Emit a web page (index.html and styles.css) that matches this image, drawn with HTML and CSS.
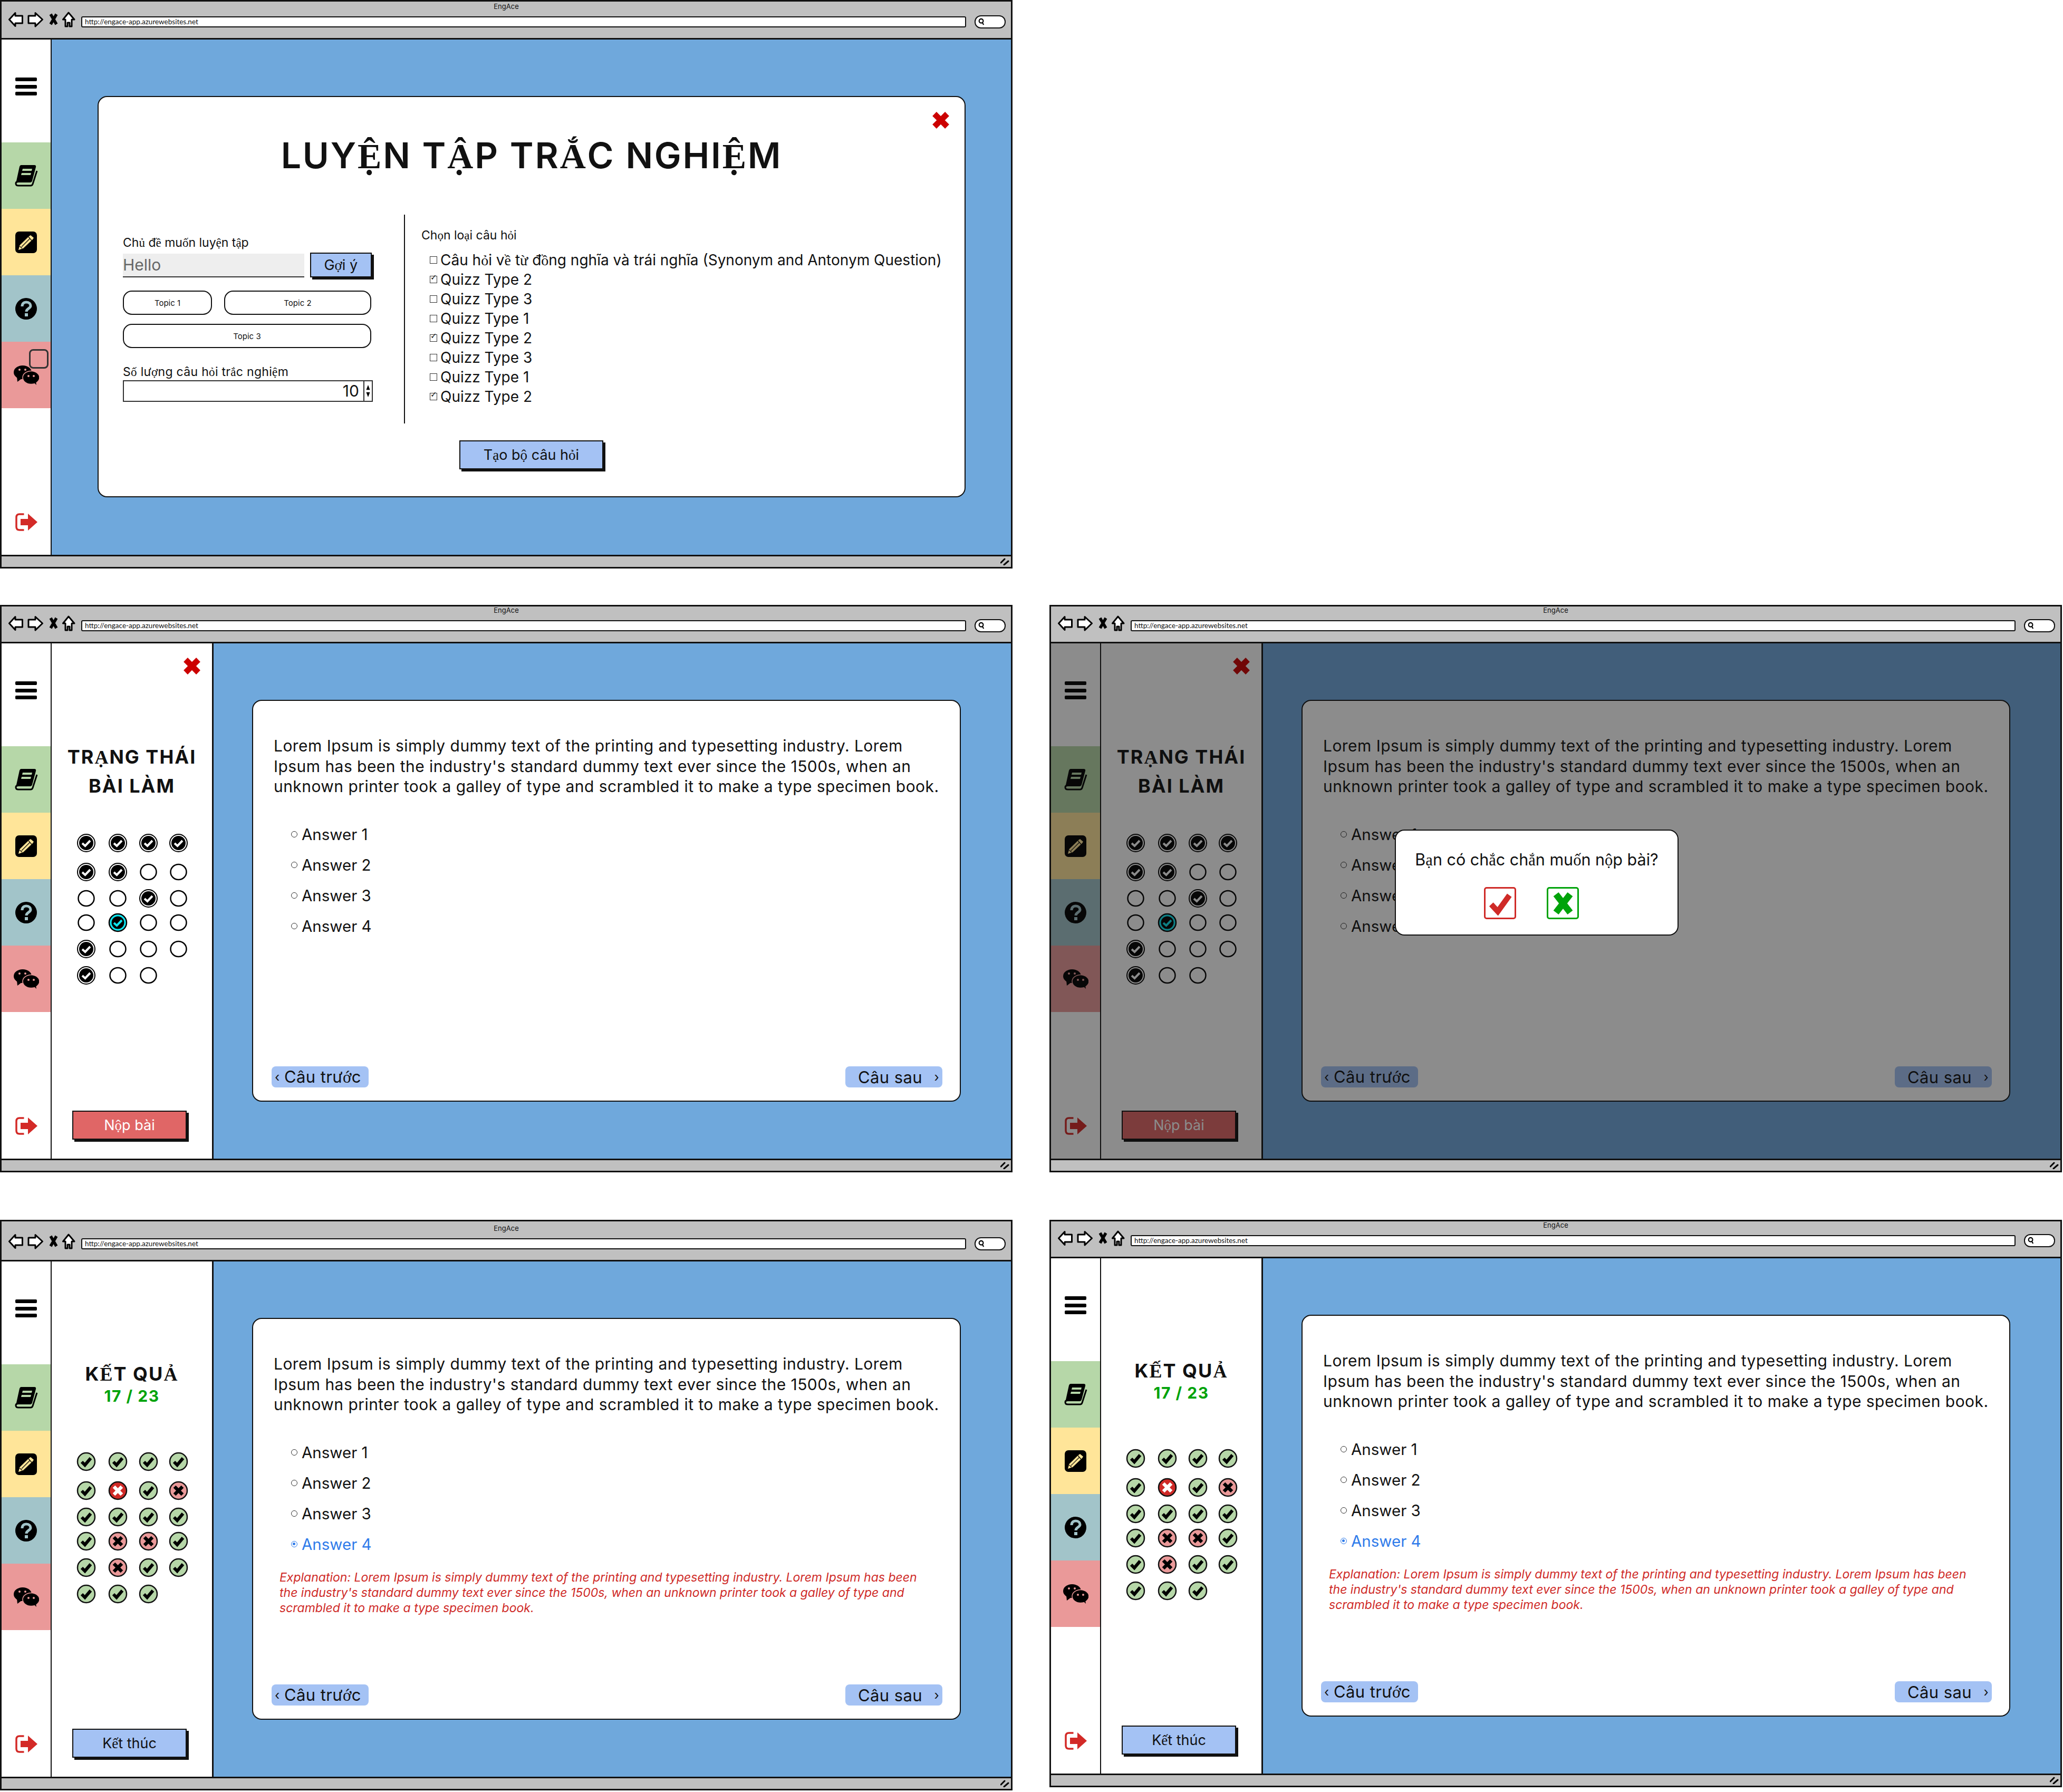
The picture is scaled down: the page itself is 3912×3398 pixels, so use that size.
FILE: index.html
```html
<!DOCTYPE html>
<html lang="vi">

<head>
    <meta charset="UTF-8">
    <title>EngAce wireframes</title>
    <link rel="stylesheet" href="styles.css">
</head>

<body>

    <!-- shared icons -->
    <svg class="sprites" xmlns="http://www.w3.org/2000/svg">
        <symbol id="i-nav" viewBox="0 0 127 30">
            <path d="M1.5 15 13 2.5V8H26.5V22H13V27.5Z" fill="#fff" stroke="#000" stroke-width="3" stroke-linejoin="round"/>
            <path d="M38 8H51V2.5L64.5 15 51 28V22H38Z" fill="#fff" stroke="#000" stroke-width="3" stroke-linejoin="round"/>
            <path d="M80 5 91 24M91 5 80 24" stroke="#000" stroke-width="5.5" fill="none"/>
            <path d="M114 2 103.500 15H108V28H112V21H116V28H120V15H125Z" fill="#fff" stroke="#000" stroke-width="3" stroke-linejoin="round"/>
        </symbol>
        <symbol id="i-lens" viewBox="0 0 14 16">
            <circle cx="6.500" cy="6.500" r="4.500" fill="none" stroke="#000" stroke-width="2.500"/>
            <path d="M9 10 12 15" stroke="#000" stroke-width="2.500"/>
        </symbol>
        <symbol id="i-menu" viewBox="0 0 41 34">
            <rect width="41" height="7" rx="2"/>
            <rect y="14" width="41" height="7" rx="2"/>
            <rect y="27" width="41" height="7" rx="2"/>
        </symbol>
        <symbol id="i-book" viewBox="0 0 44 41">
            <path d="M42 11 34 36Q33 39 30 39H7Q2 39 2 35T7 31" fill="none" stroke="#000" stroke-width="3"/>
            <path d="M12 0H37Q41 0 40 4L33 30Q32 33 29 33H7Q4 33 2 35L9 3Q10 0 12 0Z"/>
            <path d="M15 7H33L32 11H14ZM13 15H31L30 19H12Z" fill="var(--bg)"/>
        </symbol>
        <symbol id="i-pencil" viewBox="0 0 41 41">
            <rect width="41" height="41" rx="7"/>
            <path d="M6 35 8.500 26 26 9 29 7 35 12 33 15 15 32Z" fill="var(--bg)"/>
            <path d="M12 29 28 13M25 10 31 17M8.500 28 13 32" stroke="#000" stroke-width="1.200" fill="none"/>
        </symbol>
        <symbol id="i-help" viewBox="0 0 41 41">
            <circle cx="20.500" cy="20.500" r="20.500"/>
            <path d="M13 16C13 11 16 8 21 8S29 11 29 15C29 20 21 20 21 26" fill="none" stroke="var(--bg)" stroke-width="5"/>
            <rect x="18" y="29" width="6" height="6" fill="var(--bg)"/>
        </symbol>
        <symbol id="i-chat" viewBox="0 0 48 38">
            <ellipse cx="17" cy="14" rx="17" ry="13"/>
            <path d="M6 22 7 32 15 26Z"/>
            <ellipse cx="33" cy="24" rx="16" ry="12.500" stroke="var(--bg)" stroke-width="1.500"/>
            <path d="M38 33 43 38 42 31Z"/>
            <circle cx="11" cy="9" r="2" fill="var(--bg)"/>
            <circle cx="22" cy="9" r="2" fill="var(--bg)"/>
            <circle cx="28" cy="21" r="2" fill="var(--bg)"/>
            <circle cx="38" cy="21" r="2" fill="var(--bg)"/>
        </symbol>
        <symbol id="i-exit" viewBox="0 0 42 34">
            <path d="M16.500 2H8Q2 2 2 8V26Q2 32 8 32H16.500" fill="none" stroke="#d32a27" stroke-width="3.500"/>
            <path d="M10 11H24V1L42 17 24 33V23H10Z" fill="#d32a27"/>
        </symbol>
        <symbol id="i-close" viewBox="0 0 32 32">
            <path d="M4 4 28 28M28 4 4 28" stroke="#c00" stroke-width="11" fill="none"/>
        </symbol>
        <symbol id="i-grip" viewBox="0 0 18 14">
            <path d="M1 9 8 2M7 13 15 6" stroke="#000" stroke-width="3" stroke-linecap="round"/>
        </symbol>
        <symbol id="i-spin" viewBox="0 0 14 32">
            <path d="M7 0 12 13H2ZM2 19H12L7 32Z"/>
        </symbol>
        <symbol id="d-empty" viewBox="0 0 37 37">
            <ellipse cx="18.500" cy="18.500" rx="15" ry="14.500" fill="#fff" stroke="#000" stroke-width="2.500"/>
        </symbol>
        <symbol id="d-done" viewBox="0 0 37 37">
            <circle cx="18.500" cy="18.500" r="16.500" fill="#fff" stroke="#000" stroke-width="2"/>
            <circle cx="18.500" cy="18.500" r="13.500"/>
            <path d="M11 19 16.500 24 26 14" fill="none" stroke="#fff" stroke-width="4"/>
        </symbol>
        <symbol id="d-now" viewBox="0 0 37 37">
            <circle cx="18.500" cy="18.500" r="16.500" fill="#0ee6f0" stroke="#000" stroke-width="2.500"/>
            <circle cx="18.500" cy="18.500" r="12"/>
            <path d="M11 19 16.500 24 26 14" fill="none" stroke="#0ee6f0" stroke-width="4"/>
        </symbol>
        <symbol id="r-ok" viewBox="0 0 37 37">
            <circle cx="18.500" cy="18.500" r="16.500" fill="#b6d7a8" stroke="#111" stroke-width="2.500"/>
            <path d="M10 19 16 25 27 12" fill="none" stroke="#000" stroke-width="6"/>
        </symbol>
        <symbol id="r-no" viewBox="0 0 37 37">
            <circle cx="18.500" cy="18.500" r="16.500" fill="#ea9999" stroke="#111" stroke-width="2.500"/>
            <path d="M11 11 26 26M26 11 11 26" fill="none" stroke="#000" stroke-width="6.500"/>
        </symbol>
        <symbol id="r-bad" viewBox="0 0 37 37">
            <circle cx="18.500" cy="18.500" r="16.500" fill="#cf2a27" stroke="#111" stroke-width="2.500"/>
            <path d="M11 11 26 26M26 11 11 26" fill="none" stroke="#fff" stroke-width="6.500"/>
        </symbol>
    </svg>

    <!-- 1: tao bai luyen tap -->
    <section class="win win-setup">
        <header class="toolbar">
            <div class="toolbar-title">EngAce</div>
            <div class="toolbar-row">
                <svg class="nav-icons"><use href="#i-nav"/></svg>
                <div class="url">http://engace-app.azurewebsites.net</div>
                <div class="search"><svg class="lens"><use href="#i-lens"/></svg></div>
            </div>
        </header>
        <div class="win-body">
            <nav class="sidebar">
                <div class="side-top"><svg class="ic-menu"><use href="#i-menu"/></svg></div>
                <div class="side-item bg-green"><svg class="ic-book"><use href="#i-book"/></svg></div>
                <div class="side-item bg-yellow"><svg class="ic-square"><use href="#i-pencil"/></svg></div>
                <div class="side-item bg-teal"><svg class="ic-square"><use href="#i-help"/></svg></div>
                <div class="side-item bg-pink"><svg class="ic-chat"><use href="#i-chat"/></svg><span class="chat-badge"></span></div>
                <div class="side-bottom"><svg class="ic-exit"><use href="#i-exit"/></svg></div>
            </nav>
            <main class="main main-setup">
                <div class="card setup">
                    <svg class="ic-close setup-close"><use href="#i-close"/></svg>
                    <h1 class="setup-title">LUY<span class="tm">Ệ</span>N T<span class="tm">Ậ</span>P TR<span class="tm">Ắ</span>C NGHI<span class="tm">Ệ</span>M</h1>
                    <div class="setup-cols">
                        <div class="setup-left">
                            <div class="lbl">Ch<span class="tm">ủ</span> đ<span class="tm">ề</span> mu<span class="tm">ố</span>n luy<span class="tm">ệ</span>n t<span class="tm">ậ</span>p</div>
                            <div class="topic-input">
                                <div class="input">Hello</div>
                                <button class="btn btn-hint">G<span class="tm">ợ</span>i ý</button>
                            </div>
                            <div class="chips">
                                <div class="chip chip-1">Topic 1</div>
                                <div class="chip chip-2">Topic 2</div>
                                <div class="chip chip-3">Topic 3</div>
                            </div>
                            <div class="lbl lbl-count">S<span class="tm">ố</span> lư<span class="tm">ợ</span>ng câu h<span class="tm">ỏ</span>i tr<span class="tm">ắ</span>c nghi<span class="tm">ệ</span>m</div>
                            <div class="number">
                                <span class="number-val">10</span>
                                <span class="number-spin"><svg class="ic-spin"><use href="#i-spin"/></svg></span>
                            </div>
                        </div>
                        <div class="setup-right">
                            <div class="lbl">Ch<span class="tm">ọ</span>n lo<span class="tm">ạ</span>i câu h<span class="tm">ỏ</span>i</div>
                            <ul class="checks">
                                <li><span class="cb"></span><span>Câu h<span class="tm">ỏ</span>i v<span class="tm">ề</span> t<span class="tm">ừ</span> đ<span class="tm">ồ</span>ng nghĩa và trái nghĩa (Synonym and Antonym Question)</span></li>
                                <li><span class="cb on"></span><span>Quizz Type 2</span></li>
                                <li><span class="cb"></span><span>Quizz Type 3</span></li>
                                <li><span class="cb"></span><span>Quizz Type 1</span></li>
                                <li><span class="cb on"></span><span>Quizz Type 2</span></li>
                                <li><span class="cb"></span><span>Quizz Type 3</span></li>
                                <li><span class="cb"></span><span>Quizz Type 1</span></li>
                                <li><span class="cb on"></span><span>Quizz Type 2</span></li>
                            </ul>
                        </div>
                    </div>
                    <button class="btn btn-create">T<span class="tm">ạ</span>o b<span class="tm">ộ</span> câu h<span class="tm">ỏ</span>i</button>
                </div>
            </main>
        </div>
        <footer class="statusbar"><svg class="grip"><use href="#i-grip"/></svg></footer>
    </section>

    <!-- 2: dang lam bai -->
    <section class="win win-quiz">
        <header class="toolbar">
            <div class="toolbar-title">EngAce</div>
            <div class="toolbar-row">
                <svg class="nav-icons"><use href="#i-nav"/></svg>
                <div class="url">http://engace-app.azurewebsites.net</div>
                <div class="search"><svg class="lens"><use href="#i-lens"/></svg></div>
            </div>
        </header>
        <div class="win-body">
            <nav class="sidebar">
                <div class="side-top"><svg class="ic-menu"><use href="#i-menu"/></svg></div>
                <div class="side-item bg-green"><svg class="ic-book"><use href="#i-book"/></svg></div>
                <div class="side-item bg-yellow"><svg class="ic-square"><use href="#i-pencil"/></svg></div>
                <div class="side-item bg-teal"><svg class="ic-square"><use href="#i-help"/></svg></div>
                <div class="side-item bg-pink"><svg class="ic-chat"><use href="#i-chat"/></svg></div>
                <div class="side-bottom"><svg class="ic-exit"><use href="#i-exit"/></svg></div>
            </nav>
            <aside class="panel">
                <svg class="ic-close panel-close"><use href="#i-close"/></svg>
                <h2 class="panel-title">TR<span class="tm">Ạ</span>NG THÁI<br>BÀI LÀM</h2>
                <div class="dots dots-status">
                    <svg class="dot"><use href="#d-done"/></svg><svg class="dot"><use href="#d-done"/></svg><svg class="dot"><use href="#d-done"/></svg><svg class="dot"><use href="#d-done"/></svg>
                    <svg class="dot"><use href="#d-done"/></svg><svg class="dot"><use href="#d-done"/></svg><svg class="dot"><use href="#d-empty"/></svg><svg class="dot"><use href="#d-empty"/></svg>
                    <svg class="dot"><use href="#d-empty"/></svg><svg class="dot"><use href="#d-empty"/></svg><svg class="dot"><use href="#d-done"/></svg><svg class="dot"><use href="#d-empty"/></svg>
                    <svg class="dot"><use href="#d-empty"/></svg><svg class="dot"><use href="#d-now"/></svg><svg class="dot"><use href="#d-empty"/></svg><svg class="dot"><use href="#d-empty"/></svg>
                    <svg class="dot"><use href="#d-done"/></svg><svg class="dot"><use href="#d-empty"/></svg><svg class="dot"><use href="#d-empty"/></svg><svg class="dot"><use href="#d-empty"/></svg>
                    <svg class="dot"><use href="#d-done"/></svg><svg class="dot"><use href="#d-empty"/></svg><svg class="dot"><use href="#d-empty"/></svg>
                </div>
                <button class="btn btn-side btn-red">N<span class="tm">ộ</span>p bài</button>
            </aside>
            <main class="main main-quiz">
                <div class="card question">
                    <p class="q-text">Lorem Ipsum is simply dummy text of the printing and typesetting industry. Lorem<br>Ipsum has been the industry's standard dummy text ever since the 1500s, when an<br>unknown printer took a galley of type and scrambled it to make a type specimen book.</p>
                    <ul class="answers">
                        <li><span class="rd"></span>Answer 1</li>
                        <li><span class="rd"></span>Answer 2</li>
                        <li><span class="rd"></span>Answer 3</li>
                        <li><span class="rd"></span>Answer 4</li>
                    </ul>
                    <div class="q-nav">
                        <div class="pager"><span class="chev">‹</span><span>Câu trư<span class="tm">ớ</span>c</span></div>
                        <div class="pager pager-next"><span>Câu sau</span><span class="chev">›</span></div>
                    </div>
                </div>
            </main>
        </div>
        <footer class="statusbar"><svg class="grip"><use href="#i-grip"/></svg></footer>
    </section>

    <!-- 3: xac nhan nop bai -->
    <section class="win win-confirm">
        <header class="toolbar">
            <div class="toolbar-title">EngAce</div>
            <div class="toolbar-row">
                <svg class="nav-icons"><use href="#i-nav"/></svg>
                <div class="url">http://engace-app.azurewebsites.net</div>
                <div class="search"><svg class="lens"><use href="#i-lens"/></svg></div>
            </div>
        </header>
        <div class="win-body">
            <nav class="sidebar">
                <div class="side-top"><svg class="ic-menu"><use href="#i-menu"/></svg></div>
                <div class="side-item bg-green"><svg class="ic-book"><use href="#i-book"/></svg></div>
                <div class="side-item bg-yellow"><svg class="ic-square"><use href="#i-pencil"/></svg></div>
                <div class="side-item bg-teal"><svg class="ic-square"><use href="#i-help"/></svg></div>
                <div class="side-item bg-pink"><svg class="ic-chat"><use href="#i-chat"/></svg></div>
                <div class="side-bottom"><svg class="ic-exit"><use href="#i-exit"/></svg></div>
            </nav>
            <aside class="panel">
                <svg class="ic-close panel-close"><use href="#i-close"/></svg>
                <h2 class="panel-title">TR<span class="tm">Ạ</span>NG THÁI<br>BÀI LÀM</h2>
                <div class="dots dots-status">
                    <svg class="dot"><use href="#d-done"/></svg><svg class="dot"><use href="#d-done"/></svg><svg class="dot"><use href="#d-done"/></svg><svg class="dot"><use href="#d-done"/></svg>
                    <svg class="dot"><use href="#d-done"/></svg><svg class="dot"><use href="#d-done"/></svg><svg class="dot"><use href="#d-empty"/></svg><svg class="dot"><use href="#d-empty"/></svg>
                    <svg class="dot"><use href="#d-empty"/></svg><svg class="dot"><use href="#d-empty"/></svg><svg class="dot"><use href="#d-done"/></svg><svg class="dot"><use href="#d-empty"/></svg>
                    <svg class="dot"><use href="#d-empty"/></svg><svg class="dot"><use href="#d-now"/></svg><svg class="dot"><use href="#d-empty"/></svg><svg class="dot"><use href="#d-empty"/></svg>
                    <svg class="dot"><use href="#d-done"/></svg><svg class="dot"><use href="#d-empty"/></svg><svg class="dot"><use href="#d-empty"/></svg><svg class="dot"><use href="#d-empty"/></svg>
                    <svg class="dot"><use href="#d-done"/></svg><svg class="dot"><use href="#d-empty"/></svg><svg class="dot"><use href="#d-empty"/></svg>
                </div>
                <button class="btn btn-side btn-red">N<span class="tm">ộ</span>p bài</button>
            </aside>
            <main class="main main-quiz">
                <div class="card question">
                    <p class="q-text">Lorem Ipsum is simply dummy text of the printing and typesetting industry. Lorem<br>Ipsum has been the industry's standard dummy text ever since the 1500s, when an<br>unknown printer took a galley of type and scrambled it to make a type specimen book.</p>
                    <ul class="answers">
                        <li><span class="rd"></span>Answer 1</li>
                        <li><span class="rd"></span>Answer 2</li>
                        <li><span class="rd"></span>Answer 3</li>
                        <li><span class="rd"></span>Answer 4</li>
                    </ul>
                    <div class="q-nav">
                        <div class="pager"><span class="chev">‹</span><span>Câu trư<span class="tm">ớ</span>c</span></div>
                        <div class="pager pager-next"><span>Câu sau</span><span class="chev">›</span></div>
                    </div>
                </div>
            </main>
            <div class="dim"></div>
            <div class="dialog">
                <div class="dialog-text">B<span class="tm">ạ</span>n có ch<span class="tm">ắ</span>c ch<span class="tm">ắ</span>n mu<span class="tm">ố</span>n n<span class="tm">ộ</span>p bài?</div>
                <div class="dialog-actions">
                    <span class="choice choice-red"><svg class="choice-ic" viewBox="0 0 48 48"><path d="M6 26 19 40 42 8" fill="none" stroke="#cf2a27" stroke-width="11"/></svg></span>
                    <span class="choice choice-green"><svg class="choice-ic" viewBox="0 0 48 48"><path d="M10 6 38 42M38 6 10 42" fill="none" stroke="#00a30a" stroke-width="13"/></svg></span>
                </div>
            </div>
        </div>
        <footer class="statusbar"><svg class="grip"><use href="#i-grip"/></svg></footer>
    </section>

    <!-- 4: ket qua -->
    <section class="win win-result">
        <header class="toolbar">
            <div class="toolbar-title">EngAce</div>
            <div class="toolbar-row">
                <svg class="nav-icons"><use href="#i-nav"/></svg>
                <div class="url">http://engace-app.azurewebsites.net</div>
                <div class="search"><svg class="lens"><use href="#i-lens"/></svg></div>
            </div>
        </header>
        <div class="win-body">
            <nav class="sidebar">
                <div class="side-top"><svg class="ic-menu"><use href="#i-menu"/></svg></div>
                <div class="side-item bg-green"><svg class="ic-book"><use href="#i-book"/></svg></div>
                <div class="side-item bg-yellow"><svg class="ic-square"><use href="#i-pencil"/></svg></div>
                <div class="side-item bg-teal"><svg class="ic-square"><use href="#i-help"/></svg></div>
                <div class="side-item bg-pink"><svg class="ic-chat"><use href="#i-chat"/></svg></div>
                <div class="side-bottom"><svg class="ic-exit"><use href="#i-exit"/></svg></div>
            </nav>
            <aside class="panel panel-result">
                <h2 class="panel-title">K<span class="tm">Ế</span>T QU<span class="tm">Ả</span></h2>
                <div class="score">17 / 23</div>
                <div class="dots">
                    <svg class="dot"><use href="#r-ok"/></svg><svg class="dot"><use href="#r-ok"/></svg><svg class="dot"><use href="#r-ok"/></svg><svg class="dot"><use href="#r-ok"/></svg>
                    <svg class="dot"><use href="#r-ok"/></svg><svg class="dot"><use href="#r-bad"/></svg><svg class="dot"><use href="#r-ok"/></svg><svg class="dot"><use href="#r-no"/></svg>
                    <svg class="dot"><use href="#r-ok"/></svg><svg class="dot"><use href="#r-ok"/></svg><svg class="dot"><use href="#r-ok"/></svg><svg class="dot"><use href="#r-ok"/></svg>
                    <svg class="dot"><use href="#r-ok"/></svg><svg class="dot"><use href="#r-no"/></svg><svg class="dot"><use href="#r-no"/></svg><svg class="dot"><use href="#r-ok"/></svg>
                    <svg class="dot"><use href="#r-ok"/></svg><svg class="dot"><use href="#r-no"/></svg><svg class="dot"><use href="#r-ok"/></svg><svg class="dot"><use href="#r-ok"/></svg>
                    <svg class="dot"><use href="#r-ok"/></svg><svg class="dot"><use href="#r-ok"/></svg><svg class="dot"><use href="#r-ok"/></svg>
                </div>
                <button class="btn btn-side">K<span class="tm">ế</span>t thúc</button>
            </aside>
            <main class="main main-quiz">
                <div class="card question">
                    <p class="q-text">Lorem Ipsum is simply dummy text of the printing and typesetting industry. Lorem<br>Ipsum has been the industry's standard dummy text ever since the 1500s, when an<br>unknown printer took a galley of type and scrambled it to make a type specimen book.</p>
                    <ul class="answers">
                        <li><span class="rd"></span>Answer 1</li>
                        <li><span class="rd"></span>Answer 2</li>
                        <li><span class="rd"></span>Answer 3</li>
                        <li class="picked"><span class="rd"></span>Answer 4</li>
                    </ul>
                    <p class="explain">Explanation: Lorem Ipsum is simply dummy text of the printing and typesetting industry. Lorem Ipsum has been<br>the industry's standard dummy text ever since the 1500s, when an unknown printer took a galley of type and<br>scrambled it to make a type specimen book.</p>
                    <div class="q-nav">
                        <div class="pager"><span class="chev">‹</span><span>Câu trư<span class="tm">ớ</span>c</span></div>
                        <div class="pager pager-next"><span>Câu sau</span><span class="chev">›</span></div>
                    </div>
                </div>
            </main>
        </div>
        <footer class="statusbar"><svg class="grip"><use href="#i-grip"/></svg></footer>
    </section>

    <!-- 5: ket qua, ban thu hai -->
    <section class="win win-result-2">
        <header class="toolbar">
            <div class="toolbar-title">EngAce</div>
            <div class="toolbar-row">
                <svg class="nav-icons"><use href="#i-nav"/></svg>
                <div class="url">http://engace-app.azurewebsites.net</div>
                <div class="search"><svg class="lens"><use href="#i-lens"/></svg></div>
            </div>
        </header>
        <div class="win-body">
            <nav class="sidebar">
                <div class="side-top"><svg class="ic-menu"><use href="#i-menu"/></svg></div>
                <div class="side-item bg-green"><svg class="ic-book"><use href="#i-book"/></svg></div>
                <div class="side-item bg-yellow"><svg class="ic-square"><use href="#i-pencil"/></svg></div>
                <div class="side-item bg-teal"><svg class="ic-square"><use href="#i-help"/></svg></div>
                <div class="side-item bg-pink"><svg class="ic-chat"><use href="#i-chat"/></svg></div>
                <div class="side-bottom"><svg class="ic-exit"><use href="#i-exit"/></svg></div>
            </nav>
            <aside class="panel panel-result">
                <h2 class="panel-title">K<span class="tm">Ế</span>T QU<span class="tm">Ả</span></h2>
                <div class="score">17 / 23</div>
                <div class="dots">
                    <svg class="dot"><use href="#r-ok"/></svg><svg class="dot"><use href="#r-ok"/></svg><svg class="dot"><use href="#r-ok"/></svg><svg class="dot"><use href="#r-ok"/></svg>
                    <svg class="dot"><use href="#r-ok"/></svg><svg class="dot"><use href="#r-bad"/></svg><svg class="dot"><use href="#r-ok"/></svg><svg class="dot"><use href="#r-no"/></svg>
                    <svg class="dot"><use href="#r-ok"/></svg><svg class="dot"><use href="#r-ok"/></svg><svg class="dot"><use href="#r-ok"/></svg><svg class="dot"><use href="#r-ok"/></svg>
                    <svg class="dot"><use href="#r-ok"/></svg><svg class="dot"><use href="#r-no"/></svg><svg class="dot"><use href="#r-no"/></svg><svg class="dot"><use href="#r-ok"/></svg>
                    <svg class="dot"><use href="#r-ok"/></svg><svg class="dot"><use href="#r-no"/></svg><svg class="dot"><use href="#r-ok"/></svg><svg class="dot"><use href="#r-ok"/></svg>
                    <svg class="dot"><use href="#r-ok"/></svg><svg class="dot"><use href="#r-ok"/></svg><svg class="dot"><use href="#r-ok"/></svg>
                </div>
                <button class="btn btn-side">K<span class="tm">ế</span>t thúc</button>
            </aside>
            <main class="main main-quiz">
                <div class="card question">
                    <p class="q-text">Lorem Ipsum is simply dummy text of the printing and typesetting industry. Lorem<br>Ipsum has been the industry's standard dummy text ever since the 1500s, when an<br>unknown printer took a galley of type and scrambled it to make a type specimen book.</p>
                    <ul class="answers">
                        <li><span class="rd"></span>Answer 1</li>
                        <li><span class="rd"></span>Answer 2</li>
                        <li><span class="rd"></span>Answer 3</li>
                        <li class="picked"><span class="rd"></span>Answer 4</li>
                    </ul>
                    <p class="explain">Explanation: Lorem Ipsum is simply dummy text of the printing and typesetting industry. Lorem Ipsum has been<br>the industry's standard dummy text ever since the 1500s, when an unknown printer took a galley of type and<br>scrambled it to make a type specimen book.</p>
                    <div class="q-nav">
                        <div class="pager"><span class="chev">‹</span><span>Câu trư<span class="tm">ớ</span>c</span></div>
                        <div class="pager pager-next"><span>Câu sau</span><span class="chev">›</span></div>
                    </div>
                </div>
            </main>
        </div>
        <footer class="statusbar"><svg class="grip"><use href="#i-grip"/></svg></footer>
    </section>

</body>

</html>
```

FILE: styles.css
```css
* {
    box-sizing: border-box;
}

body {
    margin: 0;
    width: 3912px;
    height: 3398px;
    position: relative;
    overflow: hidden;
    background-color: #fff;
    color: #111;
    font-family: Inter, "Noto Sans", sans-serif;
}

h1, h2, p, ul {
    margin: 0;
    padding: 0;
    list-style: none;
}

.sprites {
    display: none;
}

/* text falls back to a serif for some vietnamese letters */
.tm {
    font-family: "Liberation Serif", serif;
}

/* windows on the sheet */
.win {
    position: absolute;
    width: 1920px;
    height: 1076px;
    border: 3px solid #111;
    display: flex;
    flex-direction: column;
    --extra: 0px;
}

.win-setup {
    left: 0;
    top: 0;
    height: 1078px;
    --extra: 2px;
}

.win-quiz {
    left: 0;
    top: 1147px;
}

.win-confirm {
    left: 1990px;
    top: 1147px;
}

.win-result {
    left: 0;
    top: 2313px;
    height: 1082px;
    --extra: 6px;
}

.win-result-2 {
    left: 1990px;
    top: 2313px;
}

/* browser chrome */
.toolbar {
    flex: none;
    height: calc(70px + var(--extra));
    padding-top: var(--extra);
    background-color: #c0c0c0;
    border-bottom: 3px solid #111;
}

.toolbar-title {
    height: 15px;
    font-size: 13px;
    line-height: 15px;
    text-align: center;
}

.toolbar-row {
    display: flex;
    align-items: flex-start;
    height: 30px;
    margin-top: 2px;
    padding: 0 10px 0 13px;
}

.nav-icons {
    flex: none;
    width: 127px;
    height: 30px;
    margin-right: 11px;
}

.url {
    flex: 1;
    height: 21px;
    margin: 9px 16px 0 0;
    padding-left: 5px;
    background-color: #fff;
    border: 2px solid #111;
    border-radius: 3px;
    font-family: Lato, sans-serif;
    font-size: 13.500px;
    line-height: 17px;
}

.search {
    flex: none;
    width: 59px;
    height: 25px;
    margin-top: 7px;
    padding: 3px 0 0 5px;
    background-color: #fff;
    border: 2px solid #111;
    border-radius: 12px;
}

.lens {
    display: block;
    width: 12px;
    height: 14px;
}

.statusbar {
    flex: none;
    height: 23px;
    display: flex;
    justify-content: flex-end;
    align-items: center;
    padding-right: 2px;
    background-color: #c0c0c0;
    border-top: 3px solid #111;
}

.grip {
    width: 18px;
    height: 14px;
}

.win-body {
    flex: 1;
    position: relative;
    display: flex;
    min-height: 0;
}

/* left rail */
.sidebar {
    flex: none;
    width: 95px;
    display: flex;
    flex-direction: column;
    background-color: #fff;
    border-right: 2px solid #111;
}

.side-top {
    height: 195px;
    display: flex;
    justify-content: center;
    align-items: center;
    padding-bottom: 17px;
}

.side-item {
    position: relative;
    height: 126px;
    display: flex;
    justify-content: center;
    align-items: center;
    background-color: var(--bg);
}

.bg-green { --bg: #b6d7a8; }
.bg-yellow { --bg: #ffe599; }
.bg-teal { --bg: #a2c4c9; }
.bg-pink { --bg: #ea9999; }

.side-bottom {
    margin-top: auto;
    display: flex;
    justify-content: center;
    padding-bottom: 45px;
}

.ic-menu { width: 41px; height: 34px; }
.ic-book { width: 44px; height: 41px; }
.ic-square { width: 41px; height: 41px; }
.ic-chat { width: 48px; height: 38px; }
.ic-exit { width: 42px; height: 34px; }
.ic-close { width: 32px; height: 32px; }

.chat-badge {
    position: absolute;
    left: 52px;
    top: 14px;
    width: 37px;
    height: 37px;
    border: 3px solid #333;
    border-radius: 8px;
}

/* blue work area */
.main {
    flex: 1;
    display: flex;
    background-color: #6fa8dc;
}

.main-setup {
    padding: 107px 86px 109px 87px;
}

.main-quiz {
    padding: 107px 95px 108px 73px;
}

.card {
    flex: 1;
    position: relative;
    display: flex;
    flex-direction: column;
    background-color: #fff;
    border: 2px solid #111;
    border-radius: 18px;
}

/* first screen */
.setup-close {
    position: absolute;
    right: 29px;
    top: 28px;
}

.setup-title {
    margin-top: 70px;
    height: 80px;
    font-size: 68px;
    line-height: 80px;
    font-weight: 600;
    letter-spacing: 2.800px;
    text-align: center;
}

.setup-cols {
    display: flex;
    margin-top: 73px;
    height: 396px;
}

.setup-left {
    flex: none;
    width: 581px;
    padding: 39px 61px 0 46px;
    border-right: 2px solid #111;
}

.lbl {
    height: 28px;
    font-size: 23px;
    line-height: 28px;
}

.lbl-count {
    margin-top: 31px;
    letter-spacing: .3px;
}

.topic-input {
    display: flex;
    align-items: flex-start;
    margin-top: 7px;
}

.input {
    width: 345px;
    height: 45px;
    background-color: #eee;
    border-bottom: 2px solid #333;
    color: #666;
    font-size: 30px;
    line-height: 43px;
}

.btn {
    display: block;
    padding: 0;
    background-color: #a4c2f4;
    border: 2px solid #111;
    box-shadow: 4px 4px 0 #111;
    color: #111;
    font-family: Inter, "Noto Sans", sans-serif;
    font-size: 27px;
    text-align: center;
}

.btn-hint {
    width: 118px;
    height: 47px;
    margin: -2px 0 0 11px;
}

.chips {
    display: grid;
    grid-template-columns: 169px 279px;
    gap: 17px 23px;
    margin-top: 25px;
}

.chip {
    display: flex;
    justify-content: center;
    align-items: center;
    height: 46px;
    border: 2px solid #111;
    border-radius: 17px;
    font-size: 15px;
}

.chip-3 {
    grid-column: 1 / 3;
}

.number {
    display: flex;
    width: 474px;
    height: 41px;
    margin-top: 2px;
    border: 2px solid #333;
}

.number-val {
    flex: 1;
    padding-right: 8px;
    font-size: 30px;
    line-height: 36px;
    text-align: right;
}

.number-spin {
    flex: none;
    width: 16px;
    display: flex;
    justify-content: center;
    align-items: center;
    border-left: 2px solid #333;
}

.ic-spin {
    width: 10px;
    height: 29px;
}

.setup-right {
    flex: 1;
    padding: 25px 0 0 31px;
}

.checks {
    margin-top: 14px;
    padding-left: 16px;
    font-size: 28px;
}

.checks li {
    display: flex;
    align-items: center;
    height: 37px;
}

.cb {
    position: relative;
    flex: none;
    width: 14px;
    height: 14px;
    margin-right: 6px;
    border: 1.5px solid #333;
}

.cb.on::after {
    content: "✓";
    position: absolute;
    left: 0;
    top: -8px;
    font-family: "DejaVu Sans", sans-serif;
    font-size: 15px;
    line-height: 20px;
}

.btn-create {
    width: 273px;
    height: 55px;
    margin: 32px 0 0 684px;
}

/* status / result panel */
.panel {
    flex: none;
    width: 307px;
    display: flex;
    flex-direction: column;
    background-color: #fff;
    border-right: 3px solid #111;
}

.panel-close {
    flex: none;
    margin: 27px 0 0 250px;
}

.panel-title {
    margin-top: 129px;
    font-size: 36px;
    line-height: 54px;
    font-weight: 700;
    letter-spacing: 2px;
    text-align: center;
}

.panel-result .panel-title {
    margin-top: 186px;
}

.score {
    height: 36px;
    margin-top: -4px;
    color: #00a30a;
    font-size: 30px;
    line-height: 36px;
    font-weight: 700;
    letter-spacing: 1.500px;
    text-align: center;
}

.dots {
    display: grid;
    grid-template-columns: 60px 60px 56px 58px;
    grid-template-rows: 55px 55px 45px 47px 53px 47px;
    justify-items: center;
    align-items: center;
    margin: 79px 0 0 35px;
}

.dots-status {
    margin-top: 54px;
}

.dot {
    width: 37px;
    height: 37px;
}

.btn-side {
    width: 217px;
    height: 55px;
    margin: auto 0 36px 39px;
}

.btn-red {
    background-color: #e06666;
    color: #fff;
}

/* question card */
.q-text {
    margin: 66px 0 0 39px;
    font-size: 30px;
    line-height: 38.6px;
    letter-spacing: .45px;
}

.answers {
    margin: 42px 0 0 72px;
    font-size: 29.500px;
}

.answers li {
    display: flex;
    align-items: center;
    height: 58px;
}

.rd {
    position: relative;
    flex: none;
    width: 12px;
    height: 12px;
    margin-right: 8px;
    border: 1.5px solid #333;
    border-radius: 50%;
}

.picked {
    color: #2f7bea;
}

.picked .rd {
    border-color: #2f7bea;
}

.picked .rd::after {
    content: "";
    position: absolute;
    left: 2px;
    top: 2px;
    width: 5px;
    height: 5px;
    border-radius: 50%;
    background-color: #2f7bea;
}

.explain {
    margin: 20px 0 0 50px;
    color: #cf2a27;
    font-size: 23px;
    line-height: 29px;
    font-style: italic;
}

.q-nav {
    display: flex;
    justify-content: space-between;
    margin: auto 33px 25px 35px;
}

.pager {
    width: 184px;
    height: 40px;
    display: flex;
    align-items: center;
    padding: 0 6px;
    background-color: #a4c2f4;
    border-radius: 8px;
    font-size: 31px;
    letter-spacing: .4px;
}

.pager-next {
    justify-content: space-between;
    padding-left: 24px;
}

.chev {
    width: 18px;
    font-size: 24px;
}

.pager-next .chev {
    width: auto;
}

/* confirm dialog */
.dim {
    position: absolute;
    inset: 0;
    background-color: rgba(15, 15, 15, .48);
}

.dialog {
    position: absolute;
    left: 652px;
    top: 353px;
    width: 538px;
    height: 201px;
    padding-top: 35px;
    background-color: #fff;
    border: 2px solid #111;
    border-radius: 18px;
}

.dialog-text {
    height: 40px;
    font-size: 30.500px;
    line-height: 40px;
    text-align: center;
}

.dialog-actions {
    display: flex;
    justify-content: center;
    gap: 58px;
    margin-top: 32px;
    padding-right: 20px;
}

.choice {
    width: 61px;
    height: 61px;
    display: flex;
    justify-content: center;
    align-items: center;
    border: 3px solid #cf2a27;
    border-radius: 5px;
}

.choice-green {
    border-color: #00a30a;
}

.choice-ic {
    width: 46px;
    height: 46px;
}
```
